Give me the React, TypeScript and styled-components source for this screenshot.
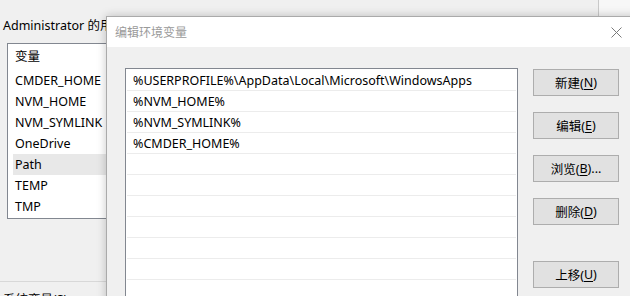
import styled, { createGlobalStyle } from 'styled-components';

const GlobalStyle = createGlobalStyle`
  html, body {
    margin: 0;
    padding: 0;
    background: #f7f7f7;
    overflow: hidden;
  }
  * {
    box-sizing: border-box;
  }
`;

const FONT = `"Noto Sans", "Noto Sans CJK SC", sans-serif`;

const userVars = ['CMDER_HOME', 'NVM_HOME', 'NVM_SYMLINK', 'OneDrive', 'Path', 'TEMP', 'TMP'];

const pathEntries = [
  '%USERPROFILE%\\AppData\\Local\\Microsoft\\WindowsApps',
  '%NVM_HOME%',
  '%NVM_SYMLINK%',
  '%CMDER_HOME%',
  '',
  '',
  '',
  '',
  '',
  '',
  '',
];

const buttons = [
  { label: '新建', key: 'N', tail: '' },
  { label: '编辑', key: 'E', tail: '' },
  { label: '浏览', key: 'B', tail: '...' },
  { label: '删除', key: 'D', tail: '' },
  { label: '上移', key: 'U', tail: '', spaced: true },
];

export default function App() {
  return (
    <Desktop>
      <GlobalStyle />
      <BackWindow>
        <Label>Administrator 的用户变量(U)</Label>
        <VarList>
          <ListHeader>变量</ListHeader>
          <VarRows>
            {userVars.map((name) => (
              <VarRow key={name} selected={name === 'Path'}>
                {name}
              </VarRow>
            ))}
          </VarRows>
        </VarList>
        <Separator />
        <Label>系统变量(S)</Label>
      </BackWindow>

      <Dialog>
        <TitleBar>
          <Title>编辑环境变量</Title>
          <CloseButton>
            <svg width="11" height="11" viewBox="0 0 11 11">
              <path d="M0.5 0.5 L10.5 10.5 M10.5 0.5 L0.5 10.5" stroke="#7a7a7a" strokeWidth="1" fill="none" />
            </svg>
          </CloseButton>
        </TitleBar>
        <DialogBody>
          <PathList>
            {pathEntries.map((entry, i) => (
              <PathRow key={i}>{entry}</PathRow>
            ))}
          </PathList>
          <ButtonColumn>
            {buttons.map((b) => (
              <Button key={b.key} spaced={b.spaced}>
                {b.label}(<u>{b.key}</u>){b.tail}
              </Button>
            ))}
          </ButtonColumn>
        </DialogBody>
      </Dialog>
    </Desktop>
  );
}

const Desktop = styled.div`
  position: relative;
  width: 630px;
  height: 296px;
  overflow: hidden;
  font-family: ${FONT};
  font-size: 12.5px;
  color: #000;
`;

const BackWindow = styled.div`
  position: absolute;
  left: 0;
  top: 0;
  width: 599px;
  height: 320px;
  background: #f0f0f0;
  border-right: 1px solid #c9c9c9;
  padding-top: 18px;
  display: flex;
  flex-direction: column;
`;

const Label = styled.div`
  height: 16px;
  line-height: 16px;
  padding-left: 3px;
  white-space: nowrap;
`;

const VarList = styled.div`
  margin: 9px 0 0 7px;
  width: 560px;
  background: #fff;
  border: 1px solid #828790;
`;

const ListHeader = styled.div`
  height: 26px;
  line-height: 26px;
  padding-left: 7px;
`;

const VarRows = styled.div`
  padding: 0 0 1px 5px;
`;

const VarRow = styled.div<{ selected?: boolean }>`
  height: 21px;
  line-height: 21px;
  padding-left: 2px;
  background: ${({ selected }) => (selected ? '#e8e8e8' : 'transparent')};
`;

const Separator = styled.div`
  margin: 62px 0 10px;
  border-top: 1px solid #d8d8d8;
`;

const Dialog = styled.div`
  position: absolute;
  left: 106px;
  top: 16px;
  width: 534px;
  height: 300px;
  border: 1px solid #aaaaaa;
  background: #f0f0f0;
  box-shadow: 0 0 9px rgba(0, 0, 0, 0.22);
  display: flex;
  flex-direction: column;
`;

const TitleBar = styled.div`
  height: 30px;
  background: #fff;
  display: flex;
  align-items: center;
  justify-content: space-between;
  padding-left: 8px;
`;

const Title = styled.div`
  color: #9a9a9a;
  font-size: 12px;
`;

const CloseButton = styled.div`
  width: 46px;
  height: 30px;
  display: flex;
  align-items: center;
  justify-content: center;
`;

const DialogBody = styled.div`
  display: flex;
  align-items: flex-start;
  padding: 21px 0 0 18px;
`;

const PathList = styled.div`
  width: 393px;
  height: 260px;
  background: #fff;
  border: 1px solid #828790;
  padding: 1px 1px 0;
  overflow: hidden;
  flex-shrink: 0;
`;

const PathRow = styled.div`
  height: 21px;
  line-height: 20px;
  padding: 1px 0 0 6px;
  border-bottom: 1px solid #ececec;
  white-space: nowrap;
  overflow: hidden;
`;

const ButtonColumn = styled.div`
  display: flex;
  flex-direction: column;
  gap: 16px;
  margin-left: 15px;
  padding-top: 1px;
`;

const Button = styled.div<{ spaced?: boolean }>`
  width: 86px;
  height: 27px;
  display: flex;
  align-items: center;
  justify-content: center;
  background: #e1e1e1;
  border: 1px solid #adadad;
  margin-top: ${({ spaced }) => (spaced ? '20px' : '0')};
  white-space: nowrap;

  u {
    text-underline-offset: 2px;
  }
`;
